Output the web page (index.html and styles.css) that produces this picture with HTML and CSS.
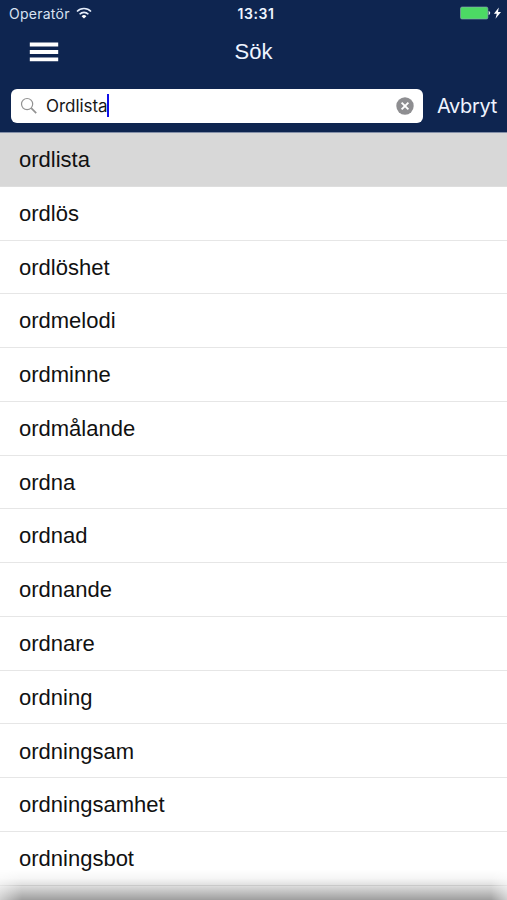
FILE: index.html
```html
<!DOCTYPE html>
<html lang="sv">
<head>
<meta charset="utf-8">
<title>Sök</title>
<link rel="stylesheet" href="styles.css">
</head>
<body>
<div class="screen">
  <header class="header">
    <div class="status">
      <div class="carrier"><span class="operator">Operatör</span>
        <svg class="wifi" viewBox="0 0 16 12"><g fill="none" stroke="#e6eefb" stroke-width="1.6"><path d="M1 4.5a9.7 9.7 0 0 1 14 0"/><path d="M3.6 7.2a6.2 6.2 0 0 1 8.8 0"/></g><path d="M5.6 9.2a3.5 3.5 0 0 1 4.8 0L8 11.6z" fill="#fff"/></svg>
      </div>
      <span class="time">13:31</span>
      <svg class="battery" viewBox="0 0 43 14"><rect x=".5" y="1" width="27.4" height="12" rx="1.5" fill="#4cd964" stroke="#91a7b8" stroke-width=".6"/><path d="M29 5.4q1.8 1.5 0 3.2z" fill="#fff" stroke="#fff" stroke-width=".6"/><path d="M38.8 1.5L33.9 7.7h2.9l-1.3 5.1 5.5-6.7h-3z" fill="#fff"/></svg>
    </div>
    <div class="titlebar">
      <svg class="menu" viewBox="0 0 30 20"><path d="M.8 2.5h28.4M.8 10h28.4M.8 17.4h28.4" stroke="#fff" stroke-width="3.8"/></svg>
      <h1 class="title">Sök</h1>
    </div>
    <div class="searchbar">
      <div class="field">
        <svg class="glass" viewBox="0 0 18 18"><circle cx="7.1" cy="7.1" r="5.6" fill="none" stroke="#929292" stroke-width="1.2"/><path d="M11.2 11.2l5 5" stroke="#929292" stroke-width="1.7"/></svg>
        <span class="query">Ordlista</span><span class="caret"></span>
        <svg class="clear" viewBox="0 0 18 18"><circle cx="9" cy="9" r="8.7" fill="#8e8e91"/><path d="M5.6 5.6l6.8 6.8m0-6.8l-6.8 6.8" stroke="#fff" stroke-width="1.9"/></svg>
      </div>
      <span class="cancel">Avbryt</span>
    </div>
  </header>
  <ul class="list">
    <li class="row selected">ordlista</li>
    <li class="row">ordlös</li>
    <li class="row">ordlöshet</li>
    <li class="row">ordmelodi</li>
    <li class="row">ordminne</li>
    <li class="row">ordmålande</li>
    <li class="row">ordna</li>
    <li class="row">ordnad</li>
    <li class="row">ordnande</li>
    <li class="row">ordnare</li>
    <li class="row">ordning</li>
    <li class="row">ordningsam</li>
    <li class="row">ordningsamhet</li>
    <li class="row">ordningsbot</li>
  </ul>
  <div class="shade"></div>
</div>
</body>
</html>
```
FILE: styles.css
```css
* { box-sizing: border-box; }
body { margin: 0; background: #fff; }
.screen {
  position: relative;
  width: 507px;
  height: 900px;
  overflow: hidden;
  font-family: "Liberation Sans", Arial, sans-serif;
}
.header {
  height: 133px;
  background: #0e2550;
  border-bottom: 1px solid #8490a8;
  color: #eef4ff;
  font-family: Inter, "Liberation Sans", sans-serif;
}
.status {
  display: grid;
  grid-template-columns: 1fr auto 1fr;
  align-items: center;
  height: 27px;
  padding: 0 4px 0 9px;
}
.carrier { display: flex; align-items: center; gap: 6px; }
.operator { font-size: 14px; letter-spacing: 0.25px; color: #d8e2f2; }
.wifi { width: 16px; height: 12px; margin-top: -1px; }
.time { font-size: 14px; font-weight: 600; letter-spacing: 0.6px; }
.battery { width: 43px; height: 14px; justify-self: end; margin-top: -1px; }
.titlebar {
  display: grid;
  grid-template-columns: 1fr auto 1fr;
  align-items: center;
  height: 50px;
  padding: 0 29px;
}
.menu { width: 30px; height: 20px; margin-top: -1px; }
.title {
  margin: 0;
  font-family: "Liberation Sans", Arial, sans-serif;
  font-size: 22px;
  font-weight: 400;
}
.searchbar {
  display: flex;
  align-items: center;
  height: 56px;
  padding: 1px 0 0 11px;
}
.field {
  display: flex;
  flex: none;
  align-items: center;
  width: 412px;
  height: 34px;
  padding: 0 9px;
  border-radius: 6px;
  background: #fff;
  color: #171717;
}
.glass { width: 18px; height: 18px; margin-right: 8px; }
.query { font-size: 17px; letter-spacing: -0.05px; }
.caret { width: 2px; height: 23px; margin: -1px 0 0 -1px; background: #1010e8; }
.clear { width: 18px; height: 18px; margin-left: auto; }
.cancel { margin-left: 14px; font-size: 20px; letter-spacing: -0.35px; }
.list { margin: 0; padding: 0; list-style: none; }
.row {
  display: flex;
  align-items: center;
  height: 53.78px;
  padding: 1.5px 0 0 19px;
  border-bottom: 1px solid #e6e6e6;
  font-size: 22px;
  color: #111;
}
.selected { background: #d8d8d8; border-color: #dedede; }
.shade {
  position: absolute;
  left: 0;
  right: 0;
  bottom: 0;
  height: 31px;
  background:
    linear-gradient(to right, rgba(255,255,255,.5), rgba(255,255,255,0) 22px, rgba(255,255,255,0) calc(100% - 16px), rgba(255,255,255,.5)),
    linear-gradient(to bottom, rgba(0,0,0,0), rgba(0,0,0,.035) 30%, rgba(0,0,0,.12) 52%, rgba(0,0,0,.38));
}
```
